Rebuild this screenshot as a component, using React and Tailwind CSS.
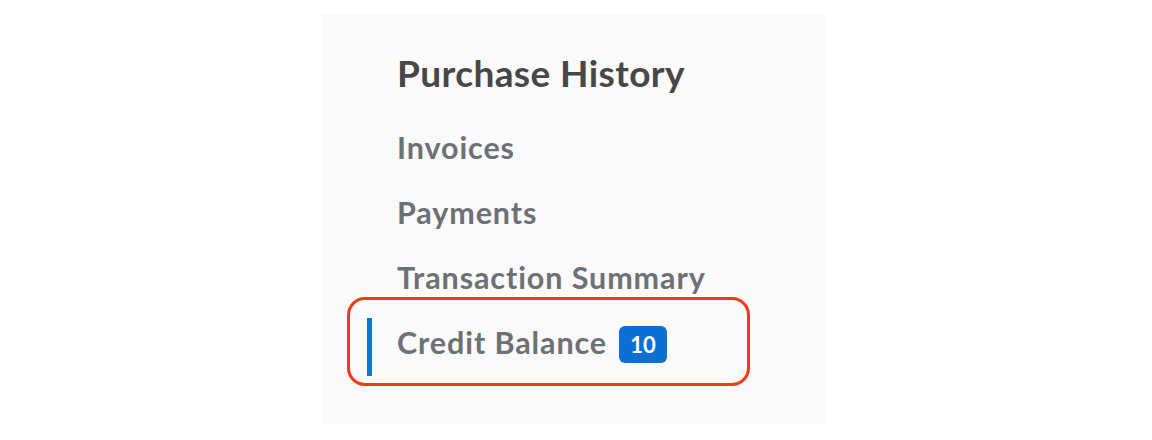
export default function App() {
  const font = { fontFamily: 'Lato, "Open Sans", sans-serif' };
  return (
    <div className="w-[1152px] h-[440px] bg-white flex justify-center" style={font}>
      <div className="ml-[-4px] mt-[14px] w-[504px] h-[410px] bg-[#fafafa] pl-[75px] pt-[37px]">
        <h2 className="text-[37px] leading-[44px] font-bold text-[#474747] tracking-[0.4px]">Purchase History</h2>
        <nav className="mt-[20px] flex flex-col">
          <div className="h-[65px] flex items-center text-[30.5px] font-bold text-[#6d7074] tracking-[0.9px]">Invoices</div>
          <div className="h-[65px] flex items-center text-[30.5px] font-bold text-[#6d7074] tracking-[0.9px]">Payments</div>
          <div className="h-[65px] flex items-center text-[30.5px] font-bold text-[#6d7074] tracking-[0.9px]">Transaction Summary</div>
          <div className="relative h-[65px] flex items-center gap-[12px] text-[30.5px] font-bold text-[#6d7074] tracking-[0.9px]">
            <span className="absolute left-[-30px] top-[8px] w-[5px] h-[58px] bg-[#0e74d9]" />
            <span className="absolute left-[-50px] top-[-13px] w-[403px] h-[89px] rounded-[18px] border-[3px] border-[#f03a17]" />
            <span>Credit Balance</span>
            <span className="w-[48px] h-[37px] mt-[3px] rounded-[6px] bg-[#0b6fd6] text-white text-[22px] font-bold flex items-center justify-center tracking-normal">10</span>
          </div>
        </nav>
      </div>
    </div>
  );
}
